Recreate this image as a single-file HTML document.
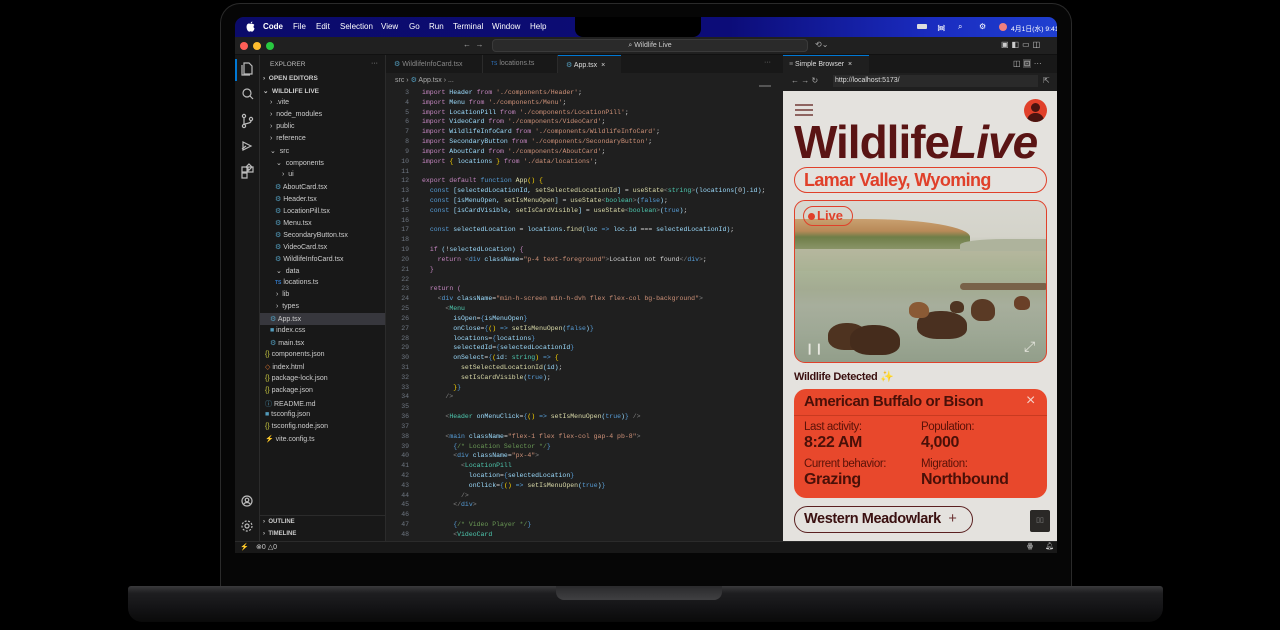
<!DOCTYPE html>
<html><head><meta charset="utf-8"><style>
*{margin:0;padding:0;box-sizing:border-box}
body{width:1280px;height:630px;background:#000;position:relative;overflow:hidden;font-family:"Liberation Sans",sans-serif}
.abs{position:absolute}
#lid{left:220px;top:3px;width:852px;height:588px;border-radius:20px 20px 0 0;background:#060606;border:1px solid #2a2a2a;border-bottom:none}
#screen{left:235px;top:17px;width:822px;height:536px;border-radius:9px 9px 0 0;overflow:hidden;background:#1e1e1e}
#menubar{left:0;top:0;width:822px;height:20px;background:linear-gradient(90deg,#0b0b6a 0%,#0c0c78 60%,#1a2cc0 85%,#1f3fd0 100%);color:#fff;font-size:8px;font-weight:bold}
#menubar span{position:absolute;top:5px;white-space:nowrap}
#notch{left:340px;top:0;width:126px;height:20px;background:#000;border-radius:0 0 8px 8px}
#title{left:0;top:20px;width:822px;height:18px;background:#202020;border-bottom:1px solid #111}
.dot{position:absolute;top:5px;width:8px;height:8px;border-radius:50%}
#act{left:0;top:38px;width:25px;height:486px;background:#181818;border-right:1px solid #2b2b2b}
#side{left:25px;top:38px;width:126px;height:486px;background:#181818;border-right:1px solid #2b2b2b;color:#ccc;font-size:7px}
#side div{position:absolute;white-space:nowrap}
#editor{left:151px;top:38px;width:397px;height:486px;background:#1f1f1f}
#tabs{left:0;top:0;width:397px;height:18px;background:#181818;font-size:7px;color:#888}
#code{left:0;top:33px;width:397px;font-family:"Liberation Mono",monospace;font-size:6.5px;line-height:9.82px;color:#9cdcfe;white-space:pre}
.ln{position:absolute;left:0;width:23px;text-align:right;color:#6e7681}
.cl{position:absolute;left:36px}
.k{color:#c586c0}.b{color:#569cd6}.s{color:#ce9178}.f{color:#dcdcaa}.t{color:#4ec9b0}.c{color:#6a9955}.w{color:#d4d4d4}.y{color:#ffd700}.g{color:#808080}
#browser{left:548px;top:38px;width:274px;height:486px;background:#1f1f1f}
#page{left:0;top:36px;width:274px;height:450px;background:#e4e2de;overflow:hidden}
#status{left:0;top:524px;width:822px;height:12px;background:#181818;border-top:1px solid #2b2b2b;color:#ccc;font-size:7px}
#base{left:128px;top:586px;width:1035px;height:36px;border-radius:3px 3px 14px 14px;background:linear-gradient(180deg,#3a3a3c 0%,#1e1e20 20%,#141416 60%,#0a0a0a 100%)}
#hinge{left:556px;top:586px;width:166px;height:14px;border-radius:0 0 8px 8px;background:linear-gradient(180deg,#2a2a2c,#404042)}
.bis{position:absolute;border-radius:45% 50% 35% 40%}
</style></head><body>
<div id="lid" class="abs"></div>
<div id="base" class="abs"></div>
<div id="hinge" class="abs"></div>
<div id="screen" class="abs">
 <div id="menubar" class="abs">
  <svg class="abs" style="left:11px;top:4px" width="9" height="11"><path d="M4.5 3C3 2 1 2.5.6 5c-.4 2.5 1.2 5.5 2.4 5.6.8.1 1-.4 1.6-.4s.9.5 1.6.4C7.4 10.5 8.5 8 8.6 7.5 7.3 6.9 7.2 4.8 8.4 4 7.6 2.8 6 2.5 4.5 3z M4.6 2.6C4.6 1.5 5.4.6 6.4.5c0 1.1-.8 2-1.8 2.1z" fill="#fff"/></svg>
  <span style="left:28px">Code</span>
  <span style="left:58px;font-weight:normal">File</span>
  <span style="left:81px;font-weight:normal">Edit</span>
  <span style="left:105px;font-weight:normal">Selection</span>
  <span style="left:146px;font-weight:normal">View</span>
  <span style="left:174px;font-weight:normal">Go</span>
  <span style="left:194px;font-weight:normal">Run</span>
  <span style="left:218px;font-weight:normal">Terminal</span>
  <span style="left:257px;font-weight:normal">Window</span>
  <span style="left:295px;font-weight:normal">Help</span>
  <span style="left:682px;top:7px;width:10px;height:5px;background:#ddd;border-radius:1px"></span>
  <span style="left:702px;font-weight:normal">᯼</span>
  <span style="left:723px;font-weight:normal">⌕</span>
  <span style="left:744px;font-weight:normal">⚙</span>
  <span style="left:764px;top:6px;width:8px;height:8px;border-radius:50%;background:#f08080"></span>
  <span style="left:776px;top:6px;font-size:6.8px;font-weight:normal">4月1日(水) 9:41</span>
 </div>
 <div id="notch" class="abs"></div>
 <div id="title" class="abs">
  <div class="dot" style="left:5px;background:#ff5f57"></div>
  <div class="dot" style="left:18px;background:#febc2e"></div>
  <div class="dot" style="left:31px;background:#28c840"></div>
  <div class="abs" style="left:228px;top:3px;color:#aaa;font-size:8px">←&nbsp; →</div>
  <div class="abs" style="left:257px;top:2px;width:316px;height:13px;background:#2a2a2a;border:1px solid #3a3a3a;border-radius:4px;color:#ccc;font-size:7px;text-align:center;line-height:11px">⌕ Wildlife Live</div>
  <div class="abs" style="left:580px;top:3px;color:#aaa;font-size:8px">⟲⌄</div>
  <div class="abs" style="left:766px;top:3px;color:#ccc;font-size:8px;letter-spacing:3px">▣◧▭◫</div>
 </div>
 <div id="act" class="abs">
  <div class="abs" style="left:0;top:4px;width:2px;height:22px;background:#0078d4"></div>
  <svg class="abs" style="left:5px;top:6px" width="15" height="120" fill="none" stroke="#bbb" stroke-width="1.2">
   <path d="M4 2h5l3 3v8H4z M2 4v10h8"/>
   <circle cx="7" cy="32" r="4"/><path d="M10 35l3 3"/>
   <circle cx="4" cy="55" r="1.6"/><circle cx="4" cy="65" r="1.6"/><circle cx="11" cy="58" r="1.6"/><path d="M4 57v6 M11 60c0 3-7 2-7 4"/>
   <path d="M3 81l8 4-8 4z M2 88l4-3"/>
   <path d="M2 106h5v5H2z M8 106h5v5H8z M2 112h5v5H2z M9 103l3 3-3 3-3-3z"/>
  </svg>
  <svg class="abs" style="left:5px;top:440px" width="15" height="45" fill="none" stroke="#bbb" stroke-width="1.2">
   <circle cx="7" cy="6" r="5"/><circle cx="7" cy="5" r="1.8"/><path d="M4 9c1-2 5-2 6 0"/>
   <circle cx="7" cy="31" r="2"/><circle cx="7" cy="31" r="5" stroke-dasharray="2 1.5"/>
  </svg>
 </div>
 <div id="side" class="abs">
  <div style="left:10px;top:6px;font-size:6.5px;color:#bbb">EXPLORER</div>
  <div style="left:111px;top:5px;color:#aaa">···</div>
  <div style="left:3px;top:20px;font-weight:bold;font-size:6.5px">›&nbsp; OPEN EDITORS</div>
  <div style="left:3px;top:32px;font-weight:bold;font-size:6.5px">⌄&nbsp; WILDLIFE LIVE</div>
  <div style="left:10px;top:44px">›&nbsp; .vite</div>
  <div style="left:10px;top:56px">›&nbsp; node_modules</div>
  <div style="left:10px;top:68px">›&nbsp; public</div>
  <div style="left:10px;top:80px">›&nbsp; reference</div>
  <div style="left:10px;top:92px">⌄&nbsp; src</div>
  <div style="left:16px;top:104px">⌄&nbsp; components</div>
  <div style="left:22px;top:116px">›&nbsp; ui</div>
  <div style="left:15px;top:128px"><span style="color:#519aba">⚙</span> AboutCard.tsx</div>
  <div style="left:15px;top:140px"><span style="color:#519aba">⚙</span> Header.tsx</div>
  <div style="left:15px;top:152px"><span style="color:#519aba">⚙</span> LocationPill.tsx</div>
  <div style="left:15px;top:164px"><span style="color:#519aba">⚙</span> Menu.tsx</div>
  <div style="left:15px;top:176px"><span style="color:#519aba">⚙</span> SecondaryButton.tsx</div>
  <div style="left:15px;top:188px"><span style="color:#519aba">⚙</span> VideoCard.tsx</div>
  <div style="left:15px;top:200px"><span style="color:#519aba">⚙</span> WildlifeInfoCard.tsx</div>
  <div style="left:16px;top:212px">⌄&nbsp; data</div>
  <div style="left:15px;top:224px"><span style="color:#3178c6;font-size:5px;font-weight:bold">TS</span> locations.ts</div>
  <div style="left:16px;top:236px">›&nbsp; lib</div>
  <div style="left:16px;top:248px">›&nbsp; types</div>
  <div style="left:0;top:258px;width:125px;height:12px;background:#37373d"></div>
  <div style="left:10px;top:260px"><span style="color:#519aba">⚙</span> App.tsx</div>
  <div style="left:10px;top:272px"><span style="color:#519aba">■</span> index.css</div>
  <div style="left:10px;top:284px"><span style="color:#519aba">⚙</span> main.tsx</div>
  <div style="left:5px;top:296px"><span style="color:#cbcb41">{}</span> components.json</div>
  <div style="left:5px;top:308px"><span style="color:#e37933">◇</span> index.html</div>
  <div style="left:5px;top:320px"><span style="color:#cbcb41">{}</span> package-lock.json</div>
  <div style="left:5px;top:332px"><span style="color:#cbcb41">{}</span> package.json</div>
  <div style="left:5px;top:344px"><span style="color:#519aba">ⓘ</span> README.md</div>
  <div style="left:5px;top:356px"><span style="color:#519aba">■</span> tsconfig.json</div>
  <div style="left:5px;top:368px"><span style="color:#cbcb41">{}</span> tsconfig.node.json</div>
  <div style="left:5px;top:380px"><span style="color:#ffd700">⚡</span> vite.config.ts</div>
  <div style="left:0;top:460px;width:125px;border-top:1px solid #2b2b2b"></div>
  <div style="left:3px;top:464px;font-weight:bold;font-size:6px">›&nbsp; OUTLINE</div>
  <div style="left:3px;top:476px;font-weight:bold;font-size:6px">›&nbsp; TIMELINE</div>
 </div>
 <div id="editor" class="abs">
  <div id="tabs" class="abs">
   <div class="abs" style="left:0;top:0;width:97px;height:18px;border-right:1px solid #2b2b2b;padding:5px 0 0 8px"><span style="color:#519aba">⚙</span> WildlifeInfoCard.tsx</div>
   <div class="abs" style="left:97px;top:0;width:75px;height:18px;border-right:1px solid #2b2b2b;padding:5px 0 0 8px"><span style="color:#3178c6;font-size:5px">TS</span> locations.ts</div>
   <div class="abs" style="left:172px;top:0;width:63px;height:18px;background:#1f1f1f;color:#ddd;padding:5px 0 0 8px;border-top:1px solid #0078d4"><span style="color:#519aba">⚙</span> App.tsx &nbsp;×</div>
   <div class="abs" style="left:378px;top:4px">···</div>
  </div>
  <div class="abs" style="left:9px;top:21px;font-size:7px;color:#aaa">src › <span style="color:#519aba">⚙</span> App.tsx › ...</div>
  <div class="abs" style="left:373px;top:30px;width:12px;height:2px;background:#555"></div>
  <div id="code" class="abs">
<div class="ln" style="top:0">3</div><div class="cl" style="top:0"><span class="k">import</span> Header <span class="k">from</span> <span class="s">'./components/Header'</span><span class="w">;</span></div>
<div class="ln" style="top:9.82px">4</div><div class="cl" style="top:9.82px"><span class="k">import</span> Menu <span class="k">from</span> <span class="s">'./components/Menu'</span><span class="w">;</span></div>
<div class="ln" style="top:19.64px">5</div><div class="cl" style="top:19.64px"><span class="k">import</span> LocationPill <span class="k">from</span> <span class="s">'./components/LocationPill'</span><span class="w">;</span></div>
<div class="ln" style="top:29.46px">6</div><div class="cl" style="top:29.46px"><span class="k">import</span> VideoCard <span class="k">from</span> <span class="s">'./components/VideoCard'</span><span class="w">;</span></div>
<div class="ln" style="top:39.28px">7</div><div class="cl" style="top:39.28px"><span class="k">import</span> WildlifeInfoCard <span class="k">from</span> <span class="s">'./components/WildlifeInfoCard'</span><span class="w">;</span></div>
<div class="ln" style="top:49.1px">8</div><div class="cl" style="top:49.1px"><span class="k">import</span> SecondaryButton <span class="k">from</span> <span class="s">'./components/SecondaryButton'</span><span class="w">;</span></div>
<div class="ln" style="top:58.92px">9</div><div class="cl" style="top:58.92px"><span class="k">import</span> AboutCard <span class="k">from</span> <span class="s">'./components/AboutCard'</span><span class="w">;</span></div>
<div class="ln" style="top:68.74px">10</div><div class="cl" style="top:68.74px"><span class="k">import</span> <span class="y">{</span> locations <span class="y">}</span> <span class="k">from</span> <span class="s">'./data/locations'</span><span class="w">;</span></div>
<div class="ln" style="top:78.56px">11</div>
<div class="ln" style="top:88.38px">12</div><div class="cl" style="top:88.38px"><span class="k">export default</span> <span class="b">function</span> <span class="f">App</span><span class="y">() {</span></div>
<div class="ln" style="top:98.2px">13</div><div class="cl" style="top:98.2px">  <span class="b">const</span> [selectedLocationId, <span class="f">setSelectedLocationId</span>] <span class="w">=</span> <span class="f">useState</span><span class="g">&lt;</span><span class="t">string</span><span class="g">&gt;</span>(locations[<span class="w">0</span>].id)<span class="w">;</span></div>
<div class="ln" style="top:108.02px">14</div><div class="cl" style="top:108.02px">  <span class="b">const</span> [isMenuOpen, <span class="f">setIsMenuOpen</span>] <span class="w">=</span> <span class="f">useState</span><span class="g">&lt;</span><span class="t">boolean</span><span class="g">&gt;</span>(<span class="b">false</span>)<span class="w">;</span></div>
<div class="ln" style="top:117.84px">15</div><div class="cl" style="top:117.84px">  <span class="b">const</span> [isCardVisible, <span class="f">setIsCardVisible</span>] <span class="w">=</span> <span class="f">useState</span><span class="g">&lt;</span><span class="t">boolean</span><span class="g">&gt;</span>(<span class="b">true</span>)<span class="w">;</span></div>
<div class="ln" style="top:127.66px">16</div>
<div class="ln" style="top:137.48px">17</div><div class="cl" style="top:137.48px">  <span class="b">const</span> selectedLocation <span class="w">=</span> locations.<span class="f">find</span>(loc <span class="b">=&gt;</span> loc.id <span class="w">===</span> selectedLocationId)<span class="w">;</span></div>
<div class="ln" style="top:147.3px">18</div>
<div class="ln" style="top:157.12px">19</div><div class="cl" style="top:157.12px">  <span class="k">if</span> (<span class="w">!</span>selectedLocation) <span class="k">{</span></div>
<div class="ln" style="top:166.94px">20</div><div class="cl" style="top:166.94px">    <span class="k">return</span> <span class="g">&lt;</span><span class="b">div</span> className<span class="w">=</span><span class="s">"p-4 text-foreground"</span><span class="g">&gt;</span><span class="w">Location not found</span><span class="g">&lt;/</span><span class="b">div</span><span class="g">&gt;</span><span class="w">;</span></div>
<div class="ln" style="top:176.76px">21</div><div class="cl" style="top:176.76px">  <span class="k">}</span></div>
<div class="ln" style="top:186.58px">22</div>
<div class="ln" style="top:196.4px">23</div><div class="cl" style="top:196.4px">  <span class="k">return</span> <span class="k">(</span></div>
<div class="ln" style="top:206.22px">24</div><div class="cl" style="top:206.22px">    <span class="g">&lt;</span><span class="b">div</span> className<span class="w">=</span><span class="s">"min-h-screen min-h-dvh flex flex-col bg-background"</span><span class="g">&gt;</span></div>
<div class="ln" style="top:216.04px">25</div><div class="cl" style="top:216.04px">      <span class="g">&lt;</span><span class="t">Menu</span></div>
<div class="ln" style="top:225.86px">26</div><div class="cl" style="top:225.86px">        isOpen<span class="w">=</span><span class="b">{</span>isMenuOpen<span class="b">}</span></div>
<div class="ln" style="top:235.68px">27</div><div class="cl" style="top:235.68px">        onClose<span class="w">=</span><span class="b">{</span><span class="y">()</span> <span class="b">=&gt;</span> <span class="f">setIsMenuOpen</span>(<span class="b">false</span>)<span class="b">}</span></div>
<div class="ln" style="top:245.5px">28</div><div class="cl" style="top:245.5px">        locations<span class="w">=</span><span class="b">{</span>locations<span class="b">}</span></div>
<div class="ln" style="top:255.32px">29</div><div class="cl" style="top:255.32px">        selectedId<span class="w">=</span><span class="b">{</span>selectedLocationId<span class="b">}</span></div>
<div class="ln" style="top:265.14px">30</div><div class="cl" style="top:265.14px">        onSelect<span class="w">=</span><span class="b">{</span><span class="y">(</span>id: <span class="t">string</span><span class="y">)</span> <span class="b">=&gt;</span> <span class="y">{</span></div>
<div class="ln" style="top:274.96px">31</div><div class="cl" style="top:274.96px">          <span class="f">setSelectedLocationId</span>(id)<span class="w">;</span></div>
<div class="ln" style="top:284.78px">32</div><div class="cl" style="top:284.78px">          <span class="f">setIsCardVisible</span>(<span class="b">true</span>)<span class="w">;</span></div>
<div class="ln" style="top:294.6px">33</div><div class="cl" style="top:294.6px">        <span class="y">}</span><span class="b">}</span></div>
<div class="ln" style="top:304.42px">34</div><div class="cl" style="top:304.42px">      <span class="g">/&gt;</span></div>
<div class="ln" style="top:314.24px">35</div>
<div class="ln" style="top:324.06px">36</div><div class="cl" style="top:324.06px">      <span class="g">&lt;</span><span class="t">Header</span> onMenuClick<span class="w">=</span><span class="b">{</span><span class="y">()</span> <span class="b">=&gt;</span> <span class="f">setIsMenuOpen</span>(<span class="b">true</span>)<span class="b">}</span> <span class="g">/&gt;</span></div>
<div class="ln" style="top:333.88px">37</div>
<div class="ln" style="top:343.7px">38</div><div class="cl" style="top:343.7px">      <span class="g">&lt;</span><span class="b">main</span> className<span class="w">=</span><span class="s">"flex-1 flex flex-col gap-4 pb-8"</span><span class="g">&gt;</span></div>
<div class="ln" style="top:353.52px">39</div><div class="cl" style="top:353.52px">        <span class="b">{</span><span class="c">/* Location Selector */</span><span class="b">}</span></div>
<div class="ln" style="top:363.34px">40</div><div class="cl" style="top:363.34px">        <span class="g">&lt;</span><span class="b">div</span> className<span class="w">=</span><span class="s">"px-4"</span><span class="g">&gt;</span></div>
<div class="ln" style="top:373.16px">41</div><div class="cl" style="top:373.16px">          <span class="g">&lt;</span><span class="t">LocationPill</span></div>
<div class="ln" style="top:382.98px">42</div><div class="cl" style="top:382.98px">            location<span class="w">=</span><span class="b">{</span>selectedLocation<span class="b">}</span></div>
<div class="ln" style="top:392.8px">43</div><div class="cl" style="top:392.8px">            onClick<span class="w">=</span><span class="b">{</span><span class="y">()</span> <span class="b">=&gt;</span> <span class="f">setIsMenuOpen</span>(<span class="b">true</span>)<span class="b">}</span></div>
<div class="ln" style="top:402.62px">44</div><div class="cl" style="top:402.62px">          <span class="g">/&gt;</span></div>
<div class="ln" style="top:412.44px">45</div><div class="cl" style="top:412.44px">        <span class="g">&lt;/</span><span class="b">div</span><span class="g">&gt;</span></div>
<div class="ln" style="top:422.26px">46</div>
<div class="ln" style="top:432.08px">47</div><div class="cl" style="top:432.08px">        <span class="b">{</span><span class="c">/* Video Player */</span><span class="b">}</span></div>
<div class="ln" style="top:441.9px">48</div><div class="cl" style="top:441.9px">        <span class="g">&lt;</span><span class="t">VideoCard</span></div>
  </div>
 </div>
 <div id="browser" class="abs">
  <div class="abs" style="left:0;top:0;width:274px;height:18px;background:#181818;border-left:1px solid #2b2b2b"></div>
  <div class="abs" style="left:0;top:0;width:86px;height:18px;background:#1f1f1f;border-top:1px solid #0078d4;color:#ddd;font-size:7px;padding:5px 0 0 6px"><span style="color:#888">≡</span> Simple Browser &nbsp;×</div>
  <div class="abs" style="left:230px;top:4px;color:#bbb;font-size:8px">◫ <span style="background:#444;padding:0 1px">⊡</span> ···</div>
  <div class="abs" style="left:8px;top:21px;color:#aaa;font-size:8px">← → ↻</div>
  <div class="abs" style="left:50px;top:20px;width:205px;height:12px;background:#2a2a2a;color:#ddd;font-size:7px;padding:2px 0 0 2px">http://localhost:5173/</div>
  <div class="abs" style="left:260px;top:21px;color:#aaa;font-size:8px">⇱</div>
  <div id="page" class="abs">
   <svg class="abs" style="left:11px;top:12px" width="20" height="14"><path d="M1 2h18M1 7h18M1 12h18" stroke="#5a1a16" stroke-width="1.2"/></svg>
   <div class="abs" style="left:241px;top:8px;width:23px;height:23px;border-radius:50%;background:#e0402a;overflow:hidden"><div class="abs" style="left:7px;top:4px;width:9px;height:9px;border-radius:50%;background:#4a1410"></div><div class="abs" style="left:3px;top:14px;width:17px;height:12px;border-radius:8px 8px 0 0;background:#4a1410"></div></div>
   <div class="abs" style="left:11px;top:26px;font-size:46px;font-weight:bold;color:#5a1414;letter-spacing:-1px;white-space:nowrap;line-height:50px">Wildlife<i>Live</i></div>
   <div class="abs" style="left:11px;top:76px;width:253px;height:26px;border:1.5px solid #e0402a;border-radius:13px;color:#e0402a;font-size:18px;font-weight:bold;letter-spacing:-0.6px;padding:2px 0 0 9px;white-space:nowrap">Lamar Valley, Wyoming</div>
   <div class="abs" style="left:11px;top:109px;width:253px;height:163px;border:1.5px solid #e0402a;border-radius:11px;overflow:hidden;background:linear-gradient(180deg,#d8d8d0 0%,#d4d3ca 22%,#b4b9a2 34%,#a9b396 45%,#a3ab92 55%,#a7ae9c 65%,#9ea895 82%,#929e8a 100%)">
    <div class="abs" style="left:0;top:18px;width:175px;height:30px;background:linear-gradient(180deg,#c9a070,#b88a58 40%,#6f7e48 60%,#8a9468 100%);border-radius:0 60% 0 0"></div>
    <div class="abs" style="left:0;top:48px;width:253px;height:22px;background:linear-gradient(180deg,#b6b79e,#a9b294)"></div>
    <div class="abs" style="left:165px;top:38px;width:88px;height:12px;background:#aeb39c;border-radius:50% 0 0 0"></div>
    <div class="abs" style="left:165px;top:82px;width:88px;height:7px;background:#6a4a30;border-radius:4px;opacity:.75"></div>
    <div class="bis" style="left:122px;top:110px;width:50px;height:28px;background:#4a3020"></div>
    <div class="bis" style="left:33px;top:122px;width:40px;height:27px;background:#4e3320"></div>
    <div class="bis" style="left:55px;top:124px;width:50px;height:30px;background:#452c1c"></div>
    <div class="bis" style="left:176px;top:98px;width:24px;height:22px;background:#5a3a25"></div>
    <div class="bis" style="left:114px;top:101px;width:20px;height:16px;background:#8a5a35"></div>
    <div class="bis" style="left:155px;top:100px;width:14px;height:12px;background:#4e3422"></div>
    <div class="bis" style="left:219px;top:95px;width:16px;height:14px;background:#6a4028"></div>
    <div class="abs" style="left:8px;top:5px;width:50px;height:20px;border:1.5px solid #e0402a;border-radius:10px;color:#e0402a;font-weight:bold;font-size:13px;line-height:17px;padding-left:4px"><span style="display:inline-block;width:7px;height:7px;border-radius:50%;background:#e0402a;margin-right:2px"></span>Live</div>
    <div class="abs" style="left:10px;top:141px;color:#e8e8e0;font-size:11px">❙❙</div>
    <div class="abs" style="left:229px;top:137px;color:#e8e8e0;font-size:14px">⤢</div>
   </div>
   <div class="abs" style="left:11px;top:279px;font-size:11px;font-weight:bold;color:#3a1010;letter-spacing:-0.3px">Wildlife Detected <span style="color:#e0402a">✨</span></div>
   <div class="abs" style="left:11px;top:298px;width:253px;height:109px;background:#e8482c;border-radius:12px;color:#4a1008;letter-spacing:-0.4px">
    <div class="abs" style="left:10px;top:4px;font-size:15px;font-weight:bold;white-space:nowrap">American Buffalo or Bison</div>
    <div class="abs" style="left:232px;top:3px;font-size:16px;color:#f5d0c8">×</div>
    <div class="abs" style="left:0;top:26px;width:253px;height:1px;background:#c83a20"></div>
    <div class="abs" style="left:10px;top:32px;font-size:11.5px;color:#5a1208">Last activity:</div>
    <div class="abs" style="left:10px;top:45px;font-size:16px;font-weight:bold">8:22 AM</div>
    <div class="abs" style="left:127px;top:32px;font-size:11.5px;color:#5a1208">Population:</div>
    <div class="abs" style="left:127px;top:45px;font-size:16px;font-weight:bold">4,000</div>
    <div class="abs" style="left:10px;top:69px;font-size:11.5px;color:#5a1208">Current behavior:</div>
    <div class="abs" style="left:10px;top:82px;font-size:16px;font-weight:bold">Grazing</div>
    <div class="abs" style="left:127px;top:69px;font-size:11.5px;color:#5a1208">Migration:</div>
    <div class="abs" style="left:127px;top:82px;font-size:16px;font-weight:bold">Northbound</div>
   </div>
   <div class="abs" style="left:11px;top:415px;width:179px;height:27px;border:1.5px solid #5a2020;border-radius:14px;color:#3a1010;font-size:14.5px;font-weight:bold;letter-spacing:-0.4px;padding:4px 0 0 9px;white-space:nowrap">Western Meadowlark <span style="font-weight:normal;color:#6a3030;margin-left:4px">+</span></div>
   <div class="abs" style="left:247px;top:419px;width:20px;height:22px;background:#2a2826;border-radius:2px;color:#888;font-size:7px;text-align:center;line-height:22px">▯▯</div>
  </div>
 </div>
 <div id="status" class="abs">
  <div class="abs" style="left:5px;top:1px;color:#aaa">⚡</div>
  <div class="abs" style="left:21px;top:1px">⊗0 △0</div>
  <div class="abs" style="left:792px;top:0">ꙮ</div>
  <div class="abs" style="left:810px;top:0">🔔︎</div>
 </div>
</div>
</body></html>
